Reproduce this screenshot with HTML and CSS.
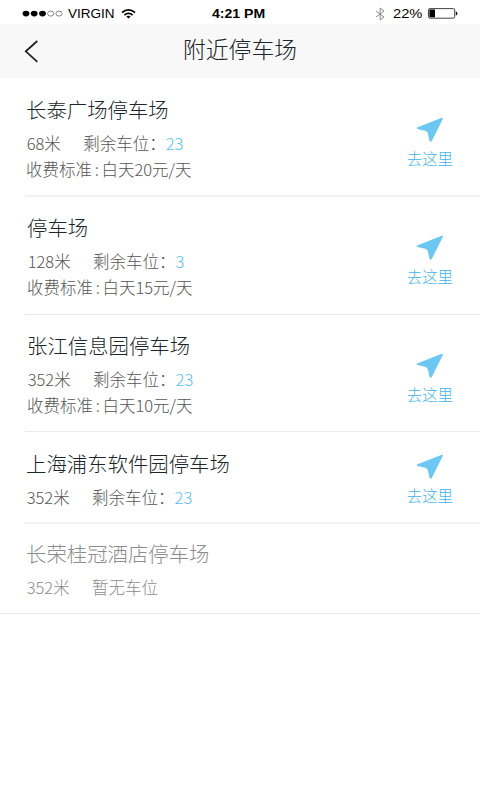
FILE: index.html
```
<!DOCTYPE html>
<html lang="zh-CN">
<head>
  <meta charset="UTF-8">
  <meta name="viewport" content="width=device-width, initial-scale=1">
  <title>附近停车场</title>
  <link rel="stylesheet" href="styles.css">
</head>
<body>

  <svg class="symbols" width="0" height="0">
    <symbol id="arrow" viewBox="0 0 28 26">
      <path d="M25.8 0.8 L1 10.6 Q0 11.6 1.6 12 L9 13.7 Q11.4 14.2 11.9 16.6 L13.5 23.8 Q14.6 25.8 15.9 23.8 L26.9 1.8 Q27 0.5 25.8 0.8Z"/>
    </symbol>
  </svg>

  <div class="status-bar">
    <div class="status-left">
      <svg class="signal" width="42" height="8" viewBox="0 0 42 8">
        <ellipse cx="4" cy="3.6" rx="3.4" ry="2.8"/>
        <ellipse cx="12.2" cy="3.6" rx="3.4" ry="2.8"/>
        <ellipse cx="20.5" cy="3.6" rx="3.4" ry="2.8"/>
        <ellipse class="empty" cx="28.7" cy="3.6" rx="3.1" ry="2.5"/>
        <ellipse class="empty" cx="37" cy="3.6" rx="3.1" ry="2.5"/>
      </svg>
      <span class="carrier">VIRGIN</span>
      <svg class="wifi" width="15" height="10" viewBox="0 0 15 10">
        <path d="M1 3.5 Q7.5 -1.6 14 3.5"/>
        <path d="M3.4 6 Q7.5 2.7 11.6 6"/>
        <path class="dot" d="M5.3 7.6 Q7.5 6 9.7 7.6 L7.5 9.6Z"/>
      </svg>
    </div>
    <span class="time">4:21 PM</span>
    <div class="status-right">
      <svg class="bluetooth" width="10" height="14" viewBox="0 0 10 14">
        <path d="M1 4 L9 10 L5.2 13 V1 L9 4 L1 10"/>
      </svg>
      <span class="percent">22%</span>
      <svg class="battery" width="30" height="11" viewBox="0 0 30 11">
        <rect class="shell" x="0.5" y="0.6" width="26.2" height="9.6" rx="1.5"/>
        <rect x="1.4" y="1.5" width="5.6" height="7.8"/>
        <path d="M27.8 3.3 Q29.4 4 29.4 5.4 Q29.4 6.8 27.8 7.5Z"/>
      </svg>
    </div>
  </div>

  <header class="header">
    <svg class="back" width="15" height="23" viewBox="0 0 15 23">
      <path d="M13.3 1 L1.8 11.3 L13.3 21.8"/>
    </svg>
    <h1>附近停车场</h1>
  </header>

  <ul class="list">
    <li class="item first">
      <div class="info">
        <h2>长泰广场停车场</h2>
        <p><span class="distance">68米</span>剩余车位：<span class="count">23</span></p>
        <p>收费标准<span class="colon">:</span>白天20元/天</p>
      </div>
      <a class="go"><svg width="28" height="26"><use href="#arrow"/></svg>去这里</a>
    </li>
    <li class="item">
      <div class="info">
        <h2>停车场</h2>
        <p><span class="distance">128米</span>剩余车位：<span class="count">3</span></p>
        <p>收费标准<span class="colon">:</span>白天15元/天</p>
      </div>
      <a class="go"><svg width="28" height="26"><use href="#arrow"/></svg>去这里</a>
    </li>
    <li class="item third">
      <div class="info">
        <h2>张江信息园停车场</h2>
        <p><span class="distance">352米</span>剩余车位：<span class="count">23</span></p>
        <p>收费标准<span class="colon">:</span>白天10元/天</p>
      </div>
      <a class="go"><svg width="28" height="26"><use href="#arrow"/></svg>去这里</a>
    </li>
    <li class="item short">
      <div class="info">
        <h2>上海浦东软件园停车场</h2>
        <p><span class="distance">352米</span>剩余车位：<span class="count">23</span></p>
      </div>
      <a class="go"><svg width="28" height="26"><use href="#arrow"/></svg>去这里</a>
    </li>
    <li class="item full">
      <div class="info">
        <h2>长荣桂冠酒店停车场</h2>
        <p><span class="distance">352米</span>暂无车位</p>
      </div>
    </li>
  </ul>

</body>
</html>
```

FILE: styles.css
```
* {
  box-sizing: border-box;
}
body {
  margin: 0;
  background: #fff;
  color: #555;
  font-family: "Noto Sans CJK SC", sans-serif;
  font-weight: 300;
}
.symbols {
  display: block;
}

/* status bar */
.status-bar {
  display: grid;
  grid-template-columns: 1fr auto 1fr;
  align-items: center;
  height: 24px;
  padding: 3px 22px 0 22px;
  color: #000;
  font: 13px/16px "Liberation Sans", Arial, sans-serif;
}
.status-left,
.status-right {
  display: flex;
  align-items: center;
}
.status-right {
  justify-content: flex-end;
}
.carrier {
  width: 48px;
  margin-left: 4px;
  transform: scaleX(1.04);
  transform-origin: left;
}
.wifi {
  margin-left: 5px;
  fill: none;
  stroke: #000;
  stroke-width: 1.7;
}
.wifi .dot {
  fill: #000;
  stroke: none;
}
.signal .empty {
  fill: none;
  stroke: #555;
  stroke-width: 0.7;
}
.time {
  margin-right: 2px;
  font-weight: bold;
  transform: scaleX(1.08);
}
.bluetooth {
  margin-right: 8px;
  fill: none;
  stroke: #888;
  stroke-width: 1;
}
.percent {
  width: 30px;
  margin-right: 5px;
  transform: scaleX(1.13);
  transform-origin: left;
}
.battery .shell {
  fill: none;
  stroke: #444;
}

/* title bar */
.header {
  display: grid;
  grid-template-columns: 60px 1fr 60px;
  align-items: center;
  height: 54px;
  background: #f8f8f8;
}
.back {
  margin-left: 24px;
  fill: none;
  stroke: #222;
  stroke-width: 1.8;
}
.header h1 {
  margin: 0 0 5px;
  color: #1c262b;
  font-size: 22.8px;
  font-weight: 300;
  line-height: 30px;
  text-align: center;
}

/* parking lots */
.list {
  margin: 0;
  padding: 0;
  list-style: none;
}
.item {
  display: flex;
  justify-content: space-between;
  height: 118px;
  margin-left: 25px;
  padding: 16px 27px 0 2px;
  border-bottom: 1px solid #e9e9e9;
}
.item.first {
  height: 119px;
  padding-top: 17px;
  padding-left: 1px;
  border-bottom: 2px solid #f2f2f2;
}
.item.third {
  height: 117px;
}
.item.short {
  height: 92px;
  padding-top: 17px;
  padding-left: 1px;
  border-bottom: 2px solid #f2f2f2;
}
.item.full {
  height: 90px;
  margin-left: 0;
  padding-top: 15px;
  padding-left: 26px;
}
.info h2 {
  margin: 0 0 7px;
  color: #1c262b;
  font-size: 20.4px;
  font-weight: 300;
  line-height: 28px;
}
.info p {
  margin: 0;
  font-size: 16.5px;
  line-height: 26px;
  white-space: nowrap;
}
.distance {
  margin-left: 0.7px;
  margin-right: 22.4px;
}
.count {
  color: #58c0f0;
}
.colon {
  display: inline-block;
  width: 9.4px;
  text-align: center;
}
.full .info h2,
.full .info p {
  color: #8c8c8c;
}
.go {
  display: flex;
  flex-direction: column;
  align-items: center;
  padding-top: 22px;
  color: #42b3e9;
  font-size: 15.4px;
  line-height: 20px;
}
.go svg {
  margin-bottom: 5px;
  fill: #6cc8f3;
}
.short .go {
  padding-top: 5px;
}
```
